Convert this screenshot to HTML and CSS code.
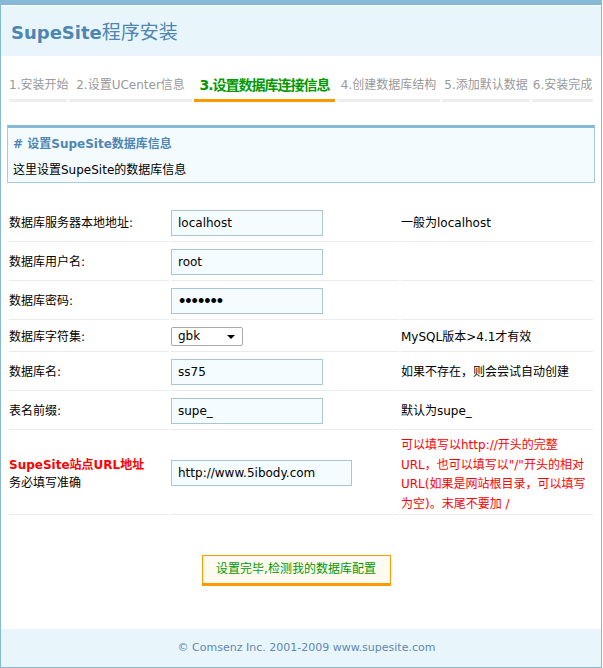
FILE: index.html
```html
<!DOCTYPE html>
<html lang="zh-CN">
<head>
<meta charset="utf-8">
<title>SupeSite程序安装</title>
<link rel="stylesheet" href="styles.css">
</head>
<body>
<div class="container">
  <div class="header">
    <h1><b>SupeSite</b><span>程序安装</span></h1>
  </div>
  <ul class="setup">
    <li class="s1">1.安装开始</li>
    <li class="s2">2.设置UCenter信息</li>
    <li class="s3 current">3.设置数据库连接信息</li>
    <li class="s4">4.创建数据库结构</li>
    <li class="s5">5.添加默认数据</li>
    <li class="s6">6.安装完成</li>
  </ul>
  <div class="main">
    <div class="notice">
      <h3># 设置SupeSite数据库信息</h3>
      <p>这里设置SupeSite的数据库信息</p>
    </div>
    <table class="form">
      <tr>
        <th>数据库服务器本地地址:</th>
        <td class="field"><input class="txt" type="text" value="localhost"></td>
        <td class="desc">一般为localhost</td>
      </tr>
      <tr>
        <th>数据库用户名:</th>
        <td class="field"><input class="txt" type="text" value="root"></td>
        <td class="desc"></td>
      </tr>
      <tr>
        <th>数据库密码:</th>
        <td class="field"><input class="txt pwd" type="password" value="1234567"></td>
        <td class="desc"></td>
      </tr>
      <tr>
        <th>数据库字符集:</th>
        <td class="field">
          <div class="select">
            <select><option>gbk</option></select>
            <svg class="arrow" width="8" height="4" viewBox="0 0 8 4"><path d="M0 0H8L4 4Z" fill="#000"/></svg>
          </div>
        </td>
        <td class="desc">MySQL版本&gt;4.1才有效</td>
      </tr>
      <tr>
        <th>数据库名:</th>
        <td class="field"><input class="txt" type="text" value="ss75"></td>
        <td class="desc">如果不存在，则会尝试自动创建</td>
      </tr>
      <tr>
        <th>表名前缀:</th>
        <td class="field"><input class="txt" type="text" value="supe_"></td>
        <td class="desc">默认为supe_</td>
      </tr>
      <tr class="url-row">
        <th><strong class="red">SupeSite站点URL地址</strong><br>务必填写准确</th>
        <td class="field"><input class="txt wide" type="text" value="http://www.5ibody.com"></td>
        <td class="desc red multi">可以填写以http://开头的完整<br>URL，也可以填写以"/"开头的相对<br>URL(如果是网站根目录，可以填写<br>为空)。末尾不要加 /</td>
      </tr>
    </table>
    <div class="actions">
      <button class="btn" type="button">设置完毕,检测我的数据库配置</button>
    </div>
  </div>
  <div class="footer">© Comsenz Inc. 2001-2009 www.supesite.com</div>
</div>
</body>
</html>
```
FILE: styles.css
```css
html, body {
  margin: 0;
  padding: 0;
  background: #fff;
}
body {
  font-family: "DejaVu Sans", "Noto Sans CJK SC", sans-serif;
  font-size: 12px;
  color: #000;
}
.container {
  width: 600px;
  border: 1px solid #86b9d6;
  border-top-width: 5px;
}
.header {
  border-top: 1px solid #fff;
  height: 47px;
  padding-top: 3px;
  background: #e8f6fc;
  display: flex;
  align-items: center;
}
.header h1 {
  margin: 0 0 0 10px;
  font-size: 18px;
  line-height: 24px;
  color: #4f86b1;
  font-weight: normal;
}
.header h1 b {
  font-weight: bold;
}
.header h1 span {
  font-size: 19px;
}
.setup {
  list-style: none;
  margin: 18px 0 0 8px;
  padding: 0;
  display: flex;
  gap: 2px;
}
.setup li {
  line-height: 22px;
  padding-bottom: 3px;
  border-bottom: 3px solid #eeeeee;
  text-align: center;
  color: #999;
  white-space: nowrap;
  font-size: 12px;
}
.setup li.current {
  color: #009900;
  font-weight: bold;
  font-size: 14px;
  letter-spacing: -1px;
  border-bottom-color: #ff9900;
}
.setup .s1 { width: 58px; }
.setup .s2 { width: 123px; }
.setup .s3 { width: 141px; }
.setup .s4 { width: 103px; }
.setup .s5 { width: 88px; }
.setup .s6 { width: 61px; }
.main {
  padding: 0 6px;
}
.notice {
  margin-top: 23px;
  border: 1px solid #a9cadc;
  border-top: 3px solid #86b9d6;
  background: #f3fbfe;
  padding: 0 5px 2px;
}
.notice h3 {
  margin: 0;
  padding-top: 6px;
  font-size: 12px;
  line-height: 20px;
  color: #4f86b1;
  font-weight: bold;
}
.notice p {
  margin: 6px 0 0;
  line-height: 20px;
}
.form {
  margin-top: 20px;
  width: 588px;
  border-collapse: separate;
  border-spacing: 2px;
  table-layout: fixed;
}
.form th,
.form td {
  padding: 5px 0;
  border-bottom: 1px solid #ebebeb;
  vertical-align: middle;
  text-align: left;
  font-weight: normal;
  line-height: 18px;
  white-space: nowrap;
}
.form th { width: 160px; }
.form td.field { width: 228px; }
.form td.multi {
  padding: 4px 0 0;
  line-height: 19.5px;
}
.url-row th {
  padding-top: 7px;
}
.red { color: #ff0000; }
strong.red { font-weight: bold; }
.txt {
  display: block;
  box-sizing: border-box;
  width: 152px;
  height: 26px;
  margin: 0;
  padding: 0 6px;
  border: 1px solid #aac5d5;
  background: #f5fcff;
  font-family: "DejaVu Sans", "Noto Sans CJK SC", sans-serif;
  font-size: 12px;
  color: #000;
  outline: none;
}
.txt.wide { width: 181px; }
.txt.pwd {
  font-family: "Liberation Sans", sans-serif;
  font-size: 18px;
  letter-spacing: 0;
  padding-left: 7px;
}
.select {
  position: relative;
  width: 72px;
  height: 19px;
}
.select select {
  display: block;
  box-sizing: border-box;
  width: 72px;
  height: 19px;
  margin: 0;
  padding: 0 0 0 6px;
  border: 1px solid #a9a9ad;
  border-radius: 2px;
  background: #fff;
  -webkit-appearance: none;
  appearance: none;
  font-family: "DejaVu Sans", sans-serif;
  font-size: 12px;
  line-height: 17px;
  color: #000;
}
.select .arrow {
  position: absolute;
  right: 8px;
  top: 8px;
}
.actions {
  margin-top: 38px;
  padding-right: 10px;
  display: flex;
  justify-content: center;
}
.btn {
  box-sizing: border-box;
  width: 189px;
  height: 31px;
  margin: 0;
  padding: 0;
  border: 1px solid #ff9900;
  border-bottom-width: 3px;
  background: #fffbf0;
  color: #009900;
  font-family: "DejaVu Sans", "Noto Sans CJK SC", sans-serif;
  font-size: 12px;
  line-height: 27px;
  cursor: pointer;
}
.footer {
  margin-top: 43px;
  height: 38px;
  padding-left: 11px;
  line-height: 38px;
  background: #e8f6fc;
  text-align: center;
  font-size: 11px;
  color: #5f88b2;
}
```
